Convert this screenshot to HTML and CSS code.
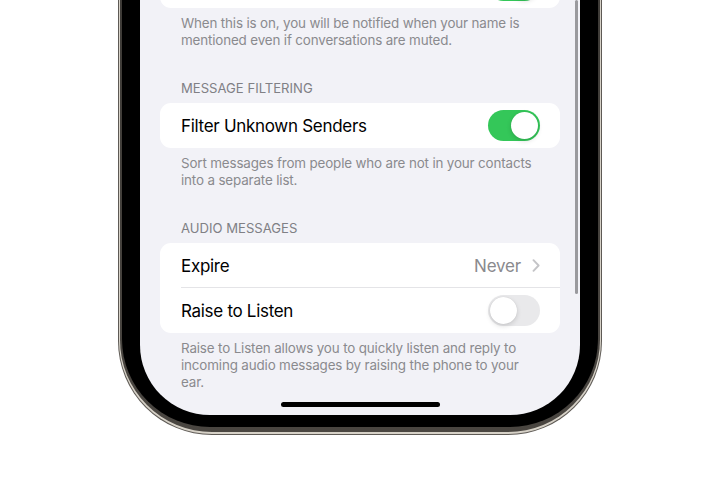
FILE: index.html
```html
<!DOCTYPE html>
<html lang="en">
<head>
<meta charset="utf-8">
<title>Messages Settings</title>
<link rel="stylesheet" href="styles.css">
</head>
<body>
<div class="phone">
  <div class="rim">
    <div class="bezel">
      <div class="screen">
        <div class="scroll-indicator"></div>
        <div class="content">
          <div class="card card-cut">
            <div class="row row-end">
              <span class="toggle on"><span class="knob"></span></span>
            </div>
          </div>
          <p class="footer first">When this is on, you will be notified when your name is mentioned even if conversations are muted.</p>

          <h2 class="header">MESSAGE FILTERING</h2>
          <div class="card">
            <div class="row">
              <span class="label">Filter Unknown Senders</span>
              <span class="toggle on"><span class="knob"></span></span>
            </div>
          </div>
          <p class="footer">Sort messages from people who are not in your contacts into a separate list.</p>

          <h2 class="header">AUDIO MESSAGES</h2>
          <div class="card">
            <div class="row divided">
              <span class="label">Expire</span>
              <span class="value">Never
                <svg class="chevron" width="8" height="13" viewBox="0 0 8 13"><path d="M1.5 1.2 L6.6 6.5 L1.5 11.8" fill="none" stroke="#c4c4c7" stroke-width="1.9" stroke-linecap="round" stroke-linejoin="round"/></svg>
              </span>
            </div>
            <div class="row">
              <span class="label">Raise to Listen</span>
              <span class="toggle off"><span class="knob"></span></span>
            </div>
          </div>
          <p class="footer">Raise to Listen allows you to quickly listen and reply to incoming audio messages by raising the phone to your ear.</p>
        </div>
        <div class="home-indicator"></div>
      </div>
    </div>
  </div>
</div>
</body>
</html>
```

FILE: styles.css
```css
* { box-sizing: border-box; }

html, body {
  margin: 0;
  padding: 0;
  background: #ffffff;
  width: 720px;
  height: 480px;
  overflow: hidden;
}

body {
  font-family: Inter, "Liberation Sans", Arial, sans-serif;
  -webkit-font-smoothing: antialiased;
}

/* outer thin dark edge */
.phone {
  width: 484px;
  height: 435px;
  margin: 0 auto;
  padding: 0 1px 1px 1px;
  background: #5e5a55;
  border-radius: 0 0 94px 94px;
}

/* light steel line */
.rim {
  height: 100%;
  padding: 0 1px 2px 1px;
  background: #d6d1c7;
  border-radius: 0 0 93px 93px;
}

/* dark inner steel + black bezel */
.bezel {
  height: 100%;
  padding: 0 2px 2px 2px;
  background: linear-gradient(#3e3b37, #4a4641);
  border-radius: 0 0 92px 92px;
  position: relative;
}

.screen {
  position: relative;
  width: 440px;
  height: 415px;
  margin: 0 auto;
  background: #f2f2f7;
  border-radius: 0 0 70px 70px;
  overflow: hidden;
  box-shadow: 0 0 0 18px #000000;
  clip-path: inset(0 -18px -12px -18px round 0 0 88px 88px);
}

.content {
  padding: 0 20px;
}

.card {
  background: #ffffff;
  border-radius: 11px;
  overflow: hidden;
}

.card-cut {
  margin-top: -37px;
}

.row {
  height: 45px;
  padding: 0 20px 0 21px;
  display: flex;
  align-items: center;
  justify-content: space-between;
  position: relative;
}

.row-end {
  justify-content: flex-end;
}

.row.divided::after {
  content: "";
  position: absolute;
  left: 21px;
  right: 0;
  bottom: 0;
  height: 1px;
  background: #e4e4e7;
}

.label {
  font-size: 17px;
  color: #000000;
  letter-spacing: -0.3px;
}

.value {
  font-size: 17px;
  color: #8a8a8e;
  letter-spacing: -0.2px;
  display: flex;
  align-items: center;
  gap: 11px;
}

.chevron {
  display: block;
}

.toggle {
  width: 52px;
  height: 31px;
  border-radius: 16px;
  position: relative;
  flex-shrink: 0;
}

.toggle.on { background: #34c759; }
.toggle.off { background: #e9e9eb; }

.knob {
  position: absolute;
  top: 2px;
  width: 27px;
  height: 27px;
  border-radius: 50%;
  background: #ffffff;
  box-shadow: 0 2px 5px rgba(0,0,0,0.14), 0 0 1px rgba(0,0,0,0.12);
}

.toggle.on .knob { right: 2px; }
.toggle.off .knob { left: 2px; }

.footer {
  margin: 0;
  padding: 7px 20px 0 21px;
  font-size: 13.4px;
  line-height: 17px;
  color: #8a8a8e;
  letter-spacing: -0.15px;
}

.header {
  margin: 31px 0 7px 0;
  padding: 0 21px;
  font-size: 13.1px;
  line-height: 16px;
  font-weight: 400;
  color: #808085;
  letter-spacing: 0;
}

.scroll-indicator {
  position: absolute;
  right: 2px;
  top: 0;
  width: 3px;
  height: 294px;
  border-radius: 2px;
  background: #9a9a9e;
}

.home-indicator {
  position: absolute;
  left: 141px;
  bottom: 8px;
  width: 159px;
  height: 5px;
  border-radius: 3px;
  background: #000000;
}
```
